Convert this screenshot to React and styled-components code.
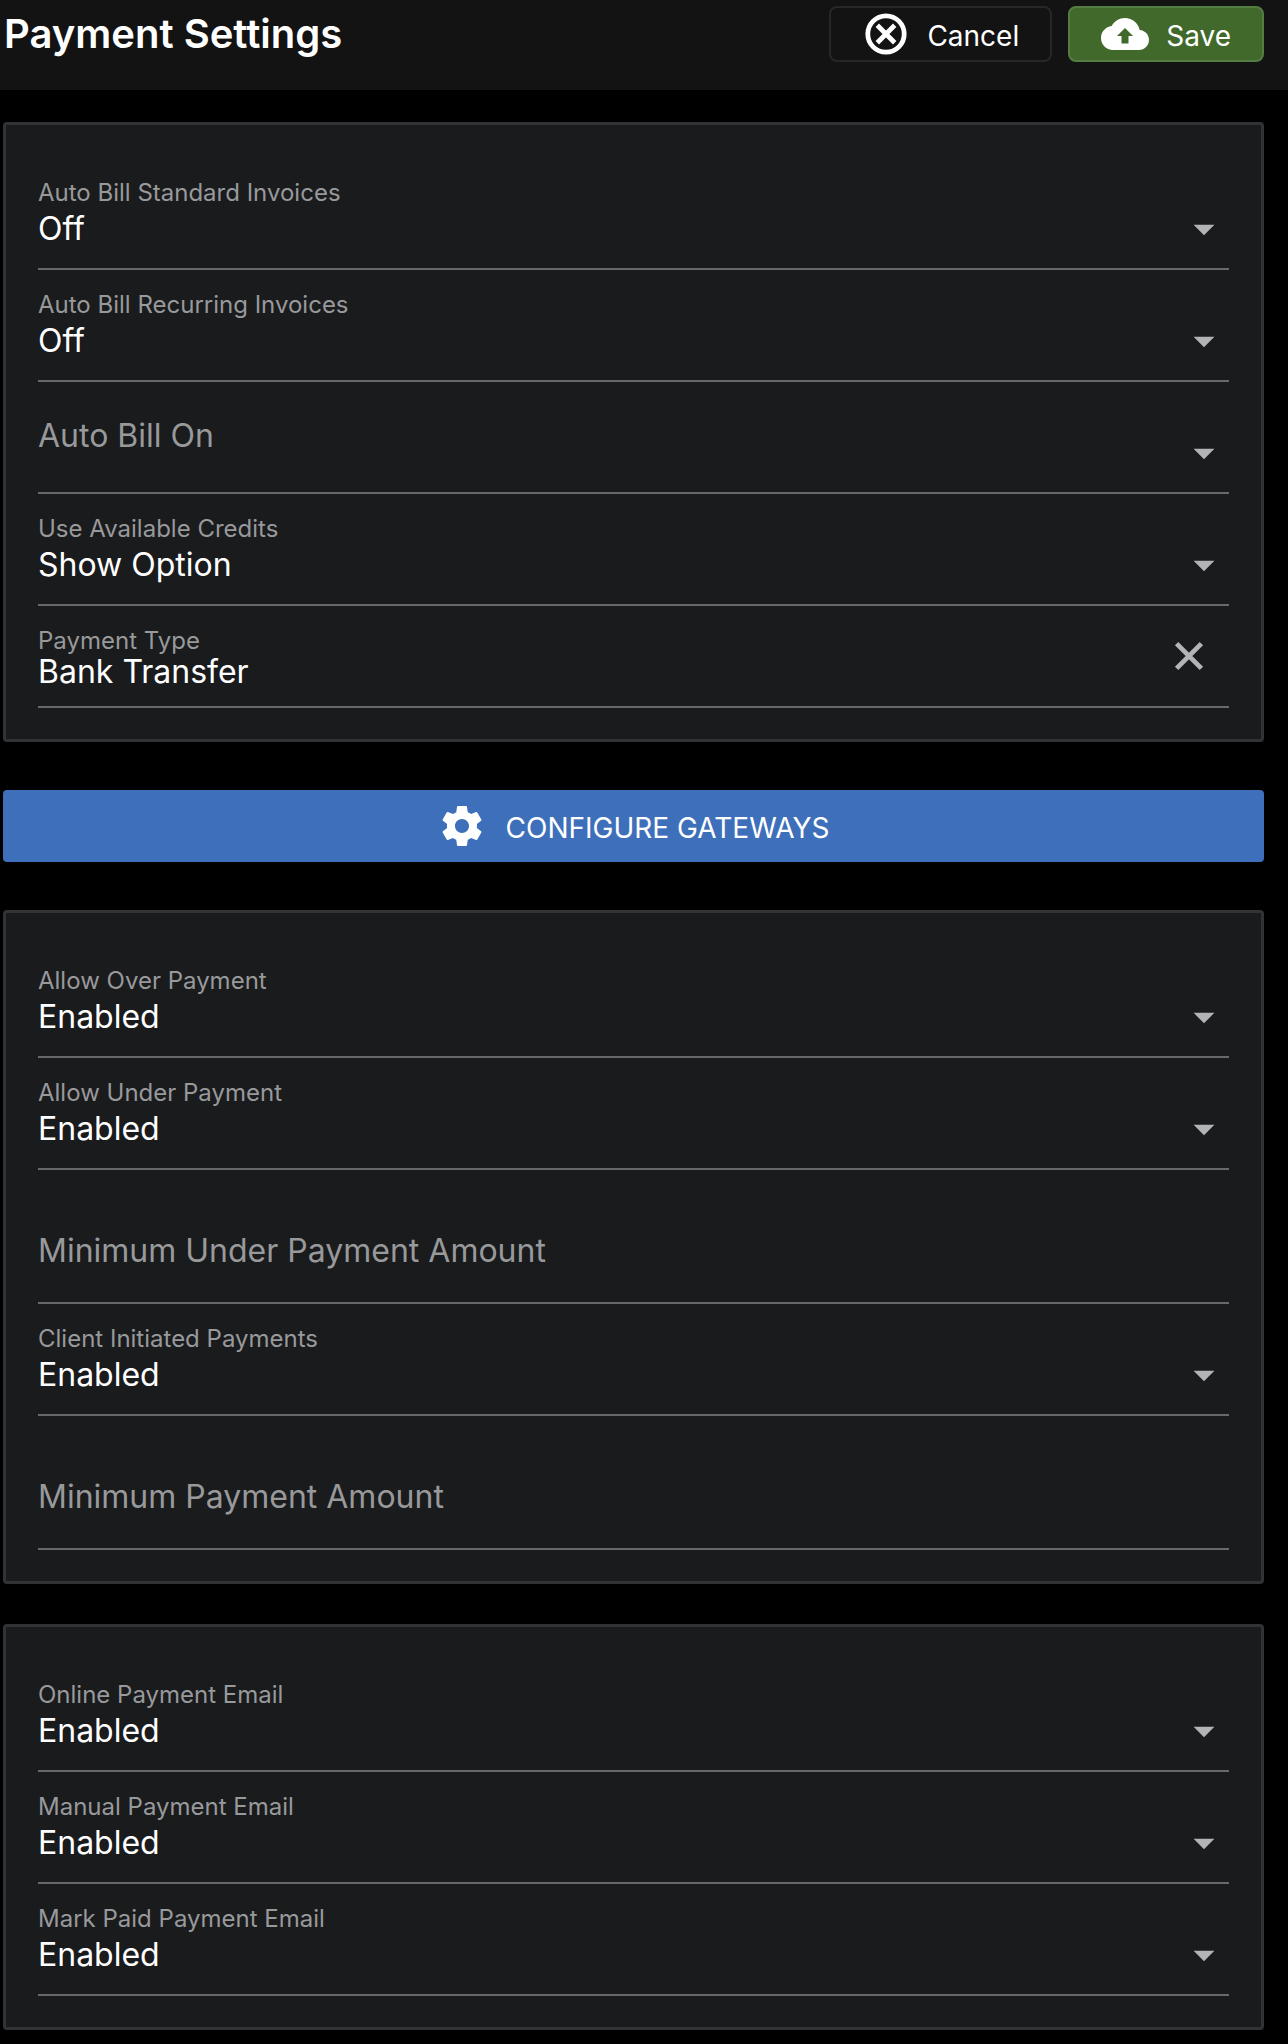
import { useId, useState } from "react";
import styled, { createGlobalStyle } from "styled-components";
import { MdArrowDropDown } from "react-icons/md";

const GlobalStyle = createGlobalStyle`
  * {
    box-sizing: border-box;
  }
  body {
    margin: 0;
    background-color: #000;
    color: #fff;
    font-family: Inter, "Liberation Sans", sans-serif;
  }
  button,
  input,
  select {
    margin: 0;
    font: inherit;
    color: inherit;
  }
`;

const Header = styled.header`
  display: flex;
  align-items: flex-start;
  justify-content: space-between;
  min-height: 90px;
  padding: 6px 24px 0 4px;
  background-color: #131313;
`;

const Title = styled.h1`
  margin: 0;
  font-size: 40px;
  font-weight: 600;
  line-height: 56px;
`;

const Actions = styled.div`
  display: flex;
  gap: 16px;
`;

const ActionButton = styled.button`
  display: flex;
  align-items: center;
  gap: 17px;
  height: 56px;
  padding: 0 31px;
  border: 2px solid ${(props) => (props.$primary ? "#547d43" : "#272727")};
  border-radius: 8px;
  background-color: ${(props) => (props.$primary ? "#41692c" : "#131313")};
  font-size: 28px;
  cursor: pointer;
`;

const ButtonText = styled.span`
  padding-top: 4px;
`;

const Main = styled.main`
  display: flex;
  flex-direction: column;
  padding: 32px 24px 14px 3px;
`;

const Card = styled.section`
  padding: 33px 32px 31px;
  border: 3px solid #323334;
  border-radius: 4px;
  background-color: #1a1b1d;

  & + & {
    margin-top: 40px;
  }
`;

const ConfigureButton = styled.button`
  display: flex;
  align-items: center;
  justify-content: center;
  gap: 20px;
  height: 72px;
  margin: 48px 0;
  border: 0;
  border-radius: 4px;
  background-color: #3e6fba;
  font-size: 28px;
  cursor: pointer;
`;

// label, control and trailing icon share a single grid cell
const Field = styled.div`
  display: grid;
  grid-template-rows: 100%;
  height: ${(props) => props.$height || 112}px;
  border-bottom: 2px solid #67686a;
  color: #b3b4b6;

  & > * {
    grid-area: 1 / 1;
  }
`;

const Label = styled.label`
  align-self: start;
  padding-top: ${(props) => props.$top || 19}px;
  color: #98999b;
  font-size: ${(props) => (props.$empty ? 32 : 24)}px;
  line-height: ${(props) => (props.$empty ? 40 : 32)}px;
  pointer-events: none;
`;

const Select = styled.select`
  width: 100%;
  height: 100%;
  padding: 50px 0 20px;
  border: 0;
  outline: 0;
  appearance: none;
  background: transparent;
  color: #fff;
  font-size: 32px;

  option {
    background-color: #1a1b1d;
  }
`;

const Input = styled.input`
  width: 100%;
  height: 100%;
  padding: 45px 0 15px;
  border: 0;
  outline: 0;
  background: transparent;
  color: #fff;
  font-size: 32px;
`;

const Arrow = styled(MdArrowDropDown)`
  align-self: end;
  justify-self: end;
  margin-bottom: 14px;
  pointer-events: none;
`;

const ClearButton = styled.button`
  display: flex;
  align-self: center;
  justify-self: end;
  margin-right: 16px;
  padding: 0;
  border: 0;
  background: transparent;
  color: #b3b4b6;
  cursor: pointer;
`;

function CancelIcon() {
  return (
    <svg width="48" height="48" viewBox="0 0 48 48" fill="none" aria-hidden="true">
      <circle cx="24" cy="24" r="18.2" stroke="currentColor" strokeWidth="4.8" />
      <path
        d="M15.3 15.3L32.7 32.7M32.7 15.3L15.3 32.7"
        stroke="currentColor"
        strokeWidth="4.8"
      />
    </svg>
  );
}

function ClearIcon() {
  return (
    <svg width="48" height="48" viewBox="0 0 48 48" fill="none" aria-hidden="true">
      <path
        d="M11.6 11.6L36.4 36.4M36.4 11.6L11.6 36.4"
        stroke="currentColor"
        strokeWidth="4.8"
      />
    </svg>
  );
}

function CloudIcon() {
  return (
    <svg width="48" height="48" viewBox="0 0 24 24" aria-hidden="true">
      <path
        fill="currentColor"
        fillRule="evenodd"
        d="M19.35 10.04C18.67 6.59 15.64 4 12 4 9.11 4 6.6 5.64 5.35 8.04 2.34 8.36 0 10.91 0 14c0 3.31 2.69 6 6 6h13c2.76 0 5-2.24 5-5 0-2.64-2.05-4.78-4.65-4.96zM8 13h2.25v3.75h3.5V13H16l-4-4z"
      />
    </svg>
  );
}

function GearIcon() {
  return (
    <svg width="48" height="48" viewBox="0 0 24 24" aria-hidden="true">
      <path
        fill="currentColor"
        d="M19.43 12.98c.04-.32.07-.64.07-.98s-.03-.66-.07-.98l2.11-1.65c.19-.15.24-.42.12-.64l-2-3.46c-.12-.22-.39-.3-.61-.22l-2.49 1c-.52-.4-1.08-.73-1.69-.98l-.38-2.65C14.46 2.18 14.25 2 14 2h-4c-.25 0-.46.18-.49.42l-.38 2.65c-.61.25-1.17.59-1.69.98l-2.49-1c-.23-.09-.49 0-.61.22l-2 3.46c-.13.22-.07.49.12.64l2.11 1.65c-.04.32-.07.65-.07.98s.03.66.07.98l-2.11 1.65c-.19.15-.24.42-.12.64l2 3.46c.12.22.39.3.61.22l2.49-1c.52.4 1.08.73 1.69.98l.38 2.65c.03.24.24.42.49.42h4c.25 0 .46-.18.49-.42l.38-2.65c.61-.25 1.17-.59 1.69-.98l2.49 1c.23.09.49 0 .61-.22l2-3.46c.12-.22.07-.49-.12-.64l-2.11-1.65zM12 15.5c-1.93 0-3.5-1.57-3.5-3.5s1.57-3.5 3.5-3.5 3.5 1.57 3.5 3.5-1.57 3.5-3.5 3.5z"
      />
    </svg>
  );
}

function SelectField({ label, options, initial }) {
  const id = useId();
  const [value, setValue] = useState(initial ?? options[0]);
  const empty = value === "";

  return (
    <Field>
      <Label htmlFor={id} $empty={empty} $top={empty ? 34 : 19}>
        {label}
      </Label>
      <Select id={id} value={value} onChange={(ev) => setValue(ev.target.value)}>
        {empty && <option value=""></option>}
        {options.map((option) => (
          <option key={option}>{option}</option>
        ))}
      </Select>
      <Arrow size={50} aria-hidden="true" />
    </Field>
  );
}

function PaymentTypeField() {
  const id = useId();
  const [value, setValue] = useState("Bank Transfer");

  return (
    <Field $height={102}>
      <Label htmlFor={id}>Payment Type</Label>
      <Input id={id} value={value} onChange={(ev) => setValue(ev.target.value)} />
      <ClearButton
        type="button"
        aria-label="Clear payment type"
        onClick={() => setValue("")}
      >
        <ClearIcon />
      </ClearButton>
    </Field>
  );
}

function AmountField({ label }) {
  const id = useId();
  const [value, setValue] = useState("");
  const empty = value === "";

  return (
    <Field $height={134}>
      <Label htmlFor={id} $empty={empty} $top={empty ? 61 : 19}>
        {label}
      </Label>
      <Input id={id} value={value} onChange={(ev) => setValue(ev.target.value)} />
    </Field>
  );
}

const autoBillOptions = ["Off", "Always", "Opt-Out", "Opt-In"];
const autoBillOnOptions = ["Send Date", "Due Date"];
const creditOptions = ["Show Option", "Always", "Off"];
const enabledOptions = ["Enabled", "Disabled"];

export default function App() {
  return (
    <>
      <GlobalStyle />
      <Header>
        <Title>Payment Settings</Title>
        <Actions>
          <ActionButton type="button">
            <CancelIcon />
            <ButtonText>Cancel</ButtonText>
          </ActionButton>
          <ActionButton type="button" $primary>
            <CloudIcon />
            <ButtonText>Save</ButtonText>
          </ActionButton>
        </Actions>
      </Header>
      <Main>
        <Card>
          <SelectField label="Auto Bill Standard Invoices" options={autoBillOptions} />
          <SelectField label="Auto Bill Recurring Invoices" options={autoBillOptions} />
          <SelectField label="Auto Bill On" options={autoBillOnOptions} initial="" />
          <SelectField label="Use Available Credits" options={creditOptions} />
          <PaymentTypeField />
        </Card>
        <ConfigureButton type="button">
          <GearIcon />
          <ButtonText>CONFIGURE GATEWAYS</ButtonText>
        </ConfigureButton>
        <Card>
          <SelectField label="Allow Over Payment" options={enabledOptions} />
          <SelectField label="Allow Under Payment" options={enabledOptions} />
          <AmountField label="Minimum Under Payment Amount" />
          <SelectField label="Client Initiated Payments" options={enabledOptions} />
          <AmountField label="Minimum Payment Amount" />
        </Card>
        <Card>
          <SelectField label="Online Payment Email" options={enabledOptions} />
          <SelectField label="Manual Payment Email" options={enabledOptions} />
          <SelectField label="Mark Paid Payment Email" options={enabledOptions} />
        </Card>
      </Main>
    </>
  );
}
